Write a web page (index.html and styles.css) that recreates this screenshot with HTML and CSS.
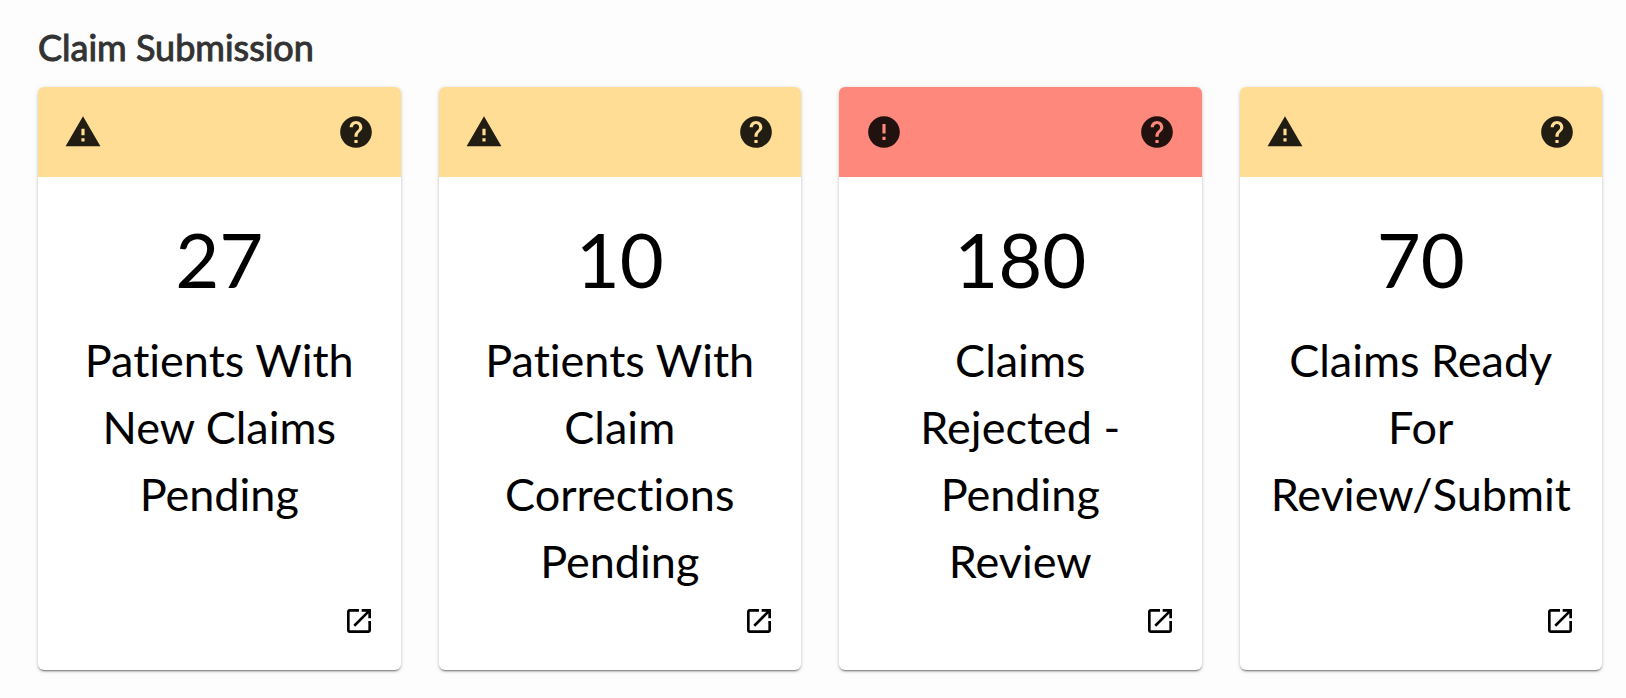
FILE: index.html
```html
<!DOCTYPE html>
<html lang="en">
<head>
<meta charset="utf-8">
<title>Claim Submission</title>
<link rel="stylesheet" href="styles.css">
</head>
<body>
<svg class="sprite" aria-hidden="true">
  <symbol id="warning" viewBox="0 0 24 24"><path d="M1 21h22L12 2 1 21zm12-3h-2v-2h2v2zm0-4h-2v-4h2v4z"/></symbol>
  <symbol id="error" viewBox="0 0 24 24"><path d="M12 2C6.48 2 2 6.48 2 12s4.48 10 10 10 10-4.480 10-10S17.520 2 12 2zm1 15h-2v-2h2v2zm0-4h-2V7h2v6z"/></symbol>
  <symbol id="help" viewBox="0 0 24 24"><path d="M12 2C6.480 2 2 6.480 2 12s4.480 10 10 10 10-4.480 10-10S17.520 2 12 2zm1 17h-2v-2h2v2zm2.070-7.750l-.9.920C13.450 12.900 13 13.500 13 15h-2v-.5c0-1.100.450-2.100 1.170-2.830l1.240-1.260c.370-.360.590-.860.590-1.410 0-1.100-.9-2-2-2s-2 .9-2 2H8c0-2.210 1.790-4 4-4s4 1.790 4 4c0 .880-.360 1.680-.930 2.250z"/></symbol>
  <symbol id="open" viewBox="0 0 24 24"><path d="M19 19H5V5h7V3H5c-1.110 0-2 .9-2 2v14c0 1.100.890 2 2 2h14c1.100 0 2-.9 2-2v-7h-2v7zM14 3v2h3.590l-9.830 9.830 1.410 1.410L19 6.410V10h2V3h-7z"/></symbol>
</svg>
<main class="section">
  <h1 class="section-title">Claim Submission</h1>
  <div class="cards">
    <article class="card">
      <header class="card-header">
        <svg class="icon" role="img" aria-label="Warning"><use href="#warning"/></svg>
        <button class="icon-button" type="button" aria-label="Help"><svg class="icon"><use href="#help"/></svg></button>
      </header>
      <div class="card-body">
        <p class="count">27</p>
        <h2 class="label">Patients With New Claims Pending</h2>
      </div>
      <footer class="card-footer">
        <a class="open-link" href="#" aria-label="Open"><svg class="icon icon-open"><use href="#open"/></svg></a>
      </footer>
    </article>
    <article class="card">
      <header class="card-header">
        <svg class="icon" role="img" aria-label="Warning"><use href="#warning"/></svg>
        <button class="icon-button" type="button" aria-label="Help"><svg class="icon"><use href="#help"/></svg></button>
      </header>
      <div class="card-body">
        <p class="count">10</p>
        <h2 class="label">Patients With Claim Corrections Pending</h2>
      </div>
      <footer class="card-footer">
        <a class="open-link" href="#" aria-label="Open"><svg class="icon icon-open"><use href="#open"/></svg></a>
      </footer>
    </article>
    <article class="card card-error">
      <header class="card-header">
        <svg class="icon" role="img" aria-label="Error"><use href="#error"/></svg>
        <button class="icon-button" type="button" aria-label="Help"><svg class="icon"><use href="#help"/></svg></button>
      </header>
      <div class="card-body">
        <p class="count">180</p>
        <h2 class="label">Claims Rejected - Pending Review</h2>
      </div>
      <footer class="card-footer">
        <a class="open-link" href="#" aria-label="Open"><svg class="icon icon-open"><use href="#open"/></svg></a>
      </footer>
    </article>
    <article class="card">
      <header class="card-header">
        <svg class="icon" role="img" aria-label="Warning"><use href="#warning"/></svg>
        <button class="icon-button" type="button" aria-label="Help"><svg class="icon"><use href="#help"/></svg></button>
      </header>
      <div class="card-body">
        <p class="count">70</p>
        <h2 class="label">Claims Ready For Review/Submit</h2>
      </div>
      <footer class="card-footer">
        <a class="open-link" href="#" aria-label="Open"><svg class="icon icon-open"><use href="#open"/></svg></a>
      </footer>
    </article>
  </div>
</main>
</body>
</html>
```
FILE: styles.css
```css
* {
  box-sizing: border-box;
}

body {
  margin: 0;
  background: #fdfdfd;
  color: #000;
  font-family: Lato, "Liberation Sans", sans-serif;
  font-variant-ligatures: none;
}

.sprite {
  display: none;
}

.section {
  padding: 24px 24px 24px 38px;
}

.section-title {
  margin: 0 0 17px;
  color: #333;
  font-size: 36px;
  font-weight: 400;
  line-height: 46px;
  -webkit-text-stroke: 1px #333;
}

.cards {
  display: grid;
  grid-template-columns: repeat(4, minmax(0, 1fr));
  gap: 38px;
}

.card {
  display: flex;
  flex-direction: column;
  overflow: hidden;
  border-radius: 6px;
  background: #fff;
  box-shadow: 0 2px 2px -1px rgba(0, 0, 0, 0.5), 0 1px 4px rgba(0, 0, 0, 0.18);
}

.card-header {
  display: flex;
  align-items: center;
  justify-content: space-between;
  padding: 26px;
  background: #ffdd95;
  color: #211d13;
}

.card-error .card-header {
  background: #fd887b;
  color: #211210;
}

.icon {
  display: block;
  width: 38px;
  height: 38px;
  fill: currentColor;
}

.icon-button {
  padding: 0;
  border: 0;
  background: none;
  color: inherit;
  cursor: pointer;
}

.card-body {
  flex: 1;
  padding: 25px 30px 0;
  text-align: center;
}

.count {
  margin: 0;
  font-size: 76px;
  line-height: 114px;
}

.label {
  margin: 11px 0 0;
  font-size: 45px;
  font-weight: 400;
  line-height: 67px;
}

.card-footer {
  display: flex;
  justify-content: flex-end;
  padding: 10px 26px 33px;
}

.open-link {
  color: #000;
}

.icon-open {
  width: 32px;
  height: 32px;
}
```
